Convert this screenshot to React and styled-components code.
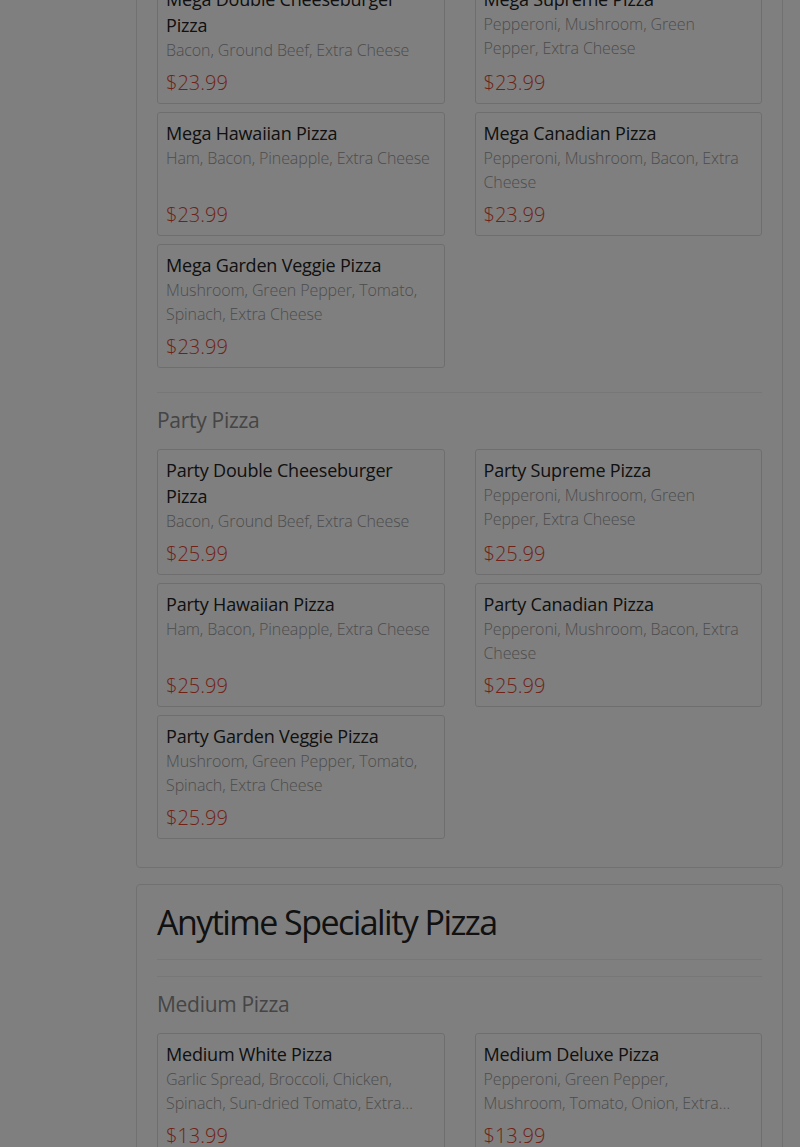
import React from "react";
import styled, { createGlobalStyle } from "styled-components";

const GlobalStyle = createGlobalStyle`
  html, body {
    margin: 0;
    padding: 0;
    background: #ffffff;
    font-family: "Open Sans", "Liberation Sans", sans-serif;
  }
`;

const menu = [
  {
    title: null,
    sections: [
      {
        name: null,
        items: [
          ["Mega Double Cheeseburger Pizza", "Bacon, Ground Beef, Extra Cheese", "$23.99"],
          ["Mega Supreme Pizza", "Pepperoni, Mushroom, Green Pepper, Extra Cheese", "$23.99"],
          ["Mega Hawaiian Pizza", "Ham, Bacon, Pineapple, Extra Cheese", "$23.99"],
          ["Mega Canadian Pizza", "Pepperoni, Mushroom, Bacon, Extra Cheese", "$23.99"],
          ["Mega Garden Veggie Pizza", "Mushroom, Green Pepper, Tomato, Spinach, Extra Cheese", "$23.99"],
        ],
      },
      {
        name: "Party Pizza",
        items: [
          ["Party Double Cheeseburger Pizza", "Bacon, Ground Beef, Extra Cheese", "$25.99"],
          ["Party Supreme Pizza", "Pepperoni, Mushroom, Green Pepper, Extra Cheese", "$25.99"],
          ["Party Hawaiian Pizza", "Ham, Bacon, Pineapple, Extra Cheese", "$25.99"],
          ["Party Canadian Pizza", "Pepperoni, Mushroom, Bacon, Extra Cheese", "$25.99"],
          ["Party Garden Veggie Pizza", "Mushroom, Green Pepper, Tomato, Spinach, Extra Cheese", "$25.99"],
        ],
      },
    ],
  },
  {
    title: "Anytime Speciality Pizza",
    sections: [
      {
        name: "Medium Pizza",
        items: [
          ["Medium White Pizza", "Garlic Spread, Broccoli, Chicken, Spinach, Sun-dried Tomato, Extra Cheese", "$13.99"],
          ["Medium Deluxe Pizza", "Pepperoni, Green Pepper, Mushroom, Tomato, Onion, Extra Cheese", "$13.99"],
          ["Medium Meat Lovers Pizza", "Pepperoni, Ham, Bacon, Ground Beef, Extra Cheese", "$13.99"],
          ["Medium Chicken Pizza", "Chicken, Bacon, Red Onion, Extra Cheese", "$13.99"],
        ],
      },
    ],
  },
];

export default function App() {
  return (
    <>
      <GlobalStyle />
      <Layout>
        <Sidebar />
        <Main>
          {menu.map((panel, i) => (
            <Panel key={i} $scrolled={i === 0}>
              {panel.title && (
                <>
                  <PanelTitle>{panel.title}</PanelTitle>
                  <Rule />
                </>
              )}
              <Sections>
                {panel.sections.map((section, j) => (
                  <Section key={j}>
                    {section.name && (
                      <>
                        <Rule />
                        <SectionName>{section.name}</SectionName>
                      </>
                    )}
                    <Grid>
                      {section.items.map(([name, desc, price]) => (
                        <Card key={name}>
                          <CardTitle>{name}</CardTitle>
                          <CardDesc>{desc}</CardDesc>
                          <Price>{price}</Price>
                        </Card>
                      ))}
                    </Grid>
                  </Section>
                ))}
              </Sections>
            </Panel>
          ))}
        </Main>
      </Layout>
      <Backdrop />
    </>
  );
}

const Layout = styled.div`
  display: grid;
  grid-template-columns: 136px 1fr;
  padding-right: 17px;
`;

const Sidebar = styled.aside``;

const Main = styled.main`
  display: flex;
  flex-direction: column;
  gap: 16px;
`;

const Panel = styled.div`
  background: #fff;
  border: 1px solid #e3e3e3;
  border-radius: 4px;
  padding: 20px 20px 28px;
  margin-top: ${(p) => (p.$scrolled ? "-43px" : "0")};
`;

const PanelTitle = styled.h1`
  margin: 0 0 19px;
  font-size: 34px;
  line-height: 35px;
  font-weight: 400;
  color: #222;
  letter-spacing: -1.55px;
`;

const Rule = styled.hr`
  margin: 0;
  border: 0;
  border-top: 1px solid #eee;
`;

const Sections = styled.div`
  display: flex;
  flex-direction: column;
  gap: 24px;
  ${PanelTitle} + ${Rule} + & {
    margin-top: 16px;
  }
`;

const Section = styled.section``;

const SectionName = styled.h3`
  margin: 15px 0 17px;
  font-size: 21px;
  line-height: 24px;
  font-weight: 400;
  color: #8a8a8a;
  letter-spacing: -0.3px;
`;

const Grid = styled.div`
  display: grid;
  grid-template-columns: 1fr 1fr;
  column-gap: 30px;
  row-gap: 8px;
`;

const Card = styled.div`
  display: flex;
  flex-direction: column;
  border: 1px solid #ddd;
  border-radius: 3px;
  padding: 7px 8px 6px;
`;

const CardTitle = styled.div`
  font-size: 18px;
  line-height: 26px;
  color: #222;
  letter-spacing: -0.2px;
`;

const CardDesc = styled.div`
  font-size: 16px;
  line-height: 24px;
  font-weight: 300;
  color: #9a9a9a;
  letter-spacing: -0.1px;
  margin-bottom: 7px;
  display: -webkit-box;
  -webkit-line-clamp: 2;
  -webkit-box-orient: vertical;
  overflow: hidden;
`;

const Price = styled.div`
  margin-top: auto;
  font-size: 20px;
  line-height: 28px;
  font-weight: 300;
  color: #e2452f;
`;

const Backdrop = styled.div`
  position: fixed;
  inset: 0;
  background: rgba(0, 0, 0, 0.5);
`;
